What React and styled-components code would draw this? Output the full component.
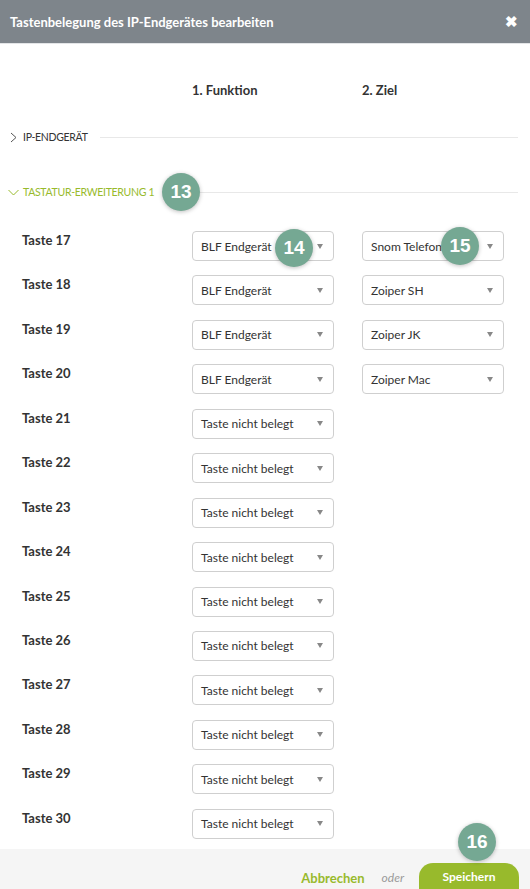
import React from 'react';
import styled, { createGlobalStyle } from 'styled-components';

const GlobalStyle = createGlobalStyle`
  html, body { margin: 0; padding: 0; background: #fff; }
  body { font-family: Lato, "Open Sans", sans-serif; color: #333; }
`;

const rows = [
  { key: 17, fn: 'BLF Endgerät', target: 'Snom Telefon', badgeFn: 14, badgeTarget: 15 },
  { key: 18, fn: 'BLF Endgerät', target: 'Zoiper SH' },
  { key: 19, fn: 'BLF Endgerät', target: 'Zoiper JK' },
  { key: 20, fn: 'BLF Endgerät', target: 'Zoiper Mac' },
  ...[21, 22, 23, 24, 25, 26, 27, 28, 29, 30].map((k) => ({ key: k, fn: 'Taste nicht belegt' })),
];

const Modal = styled.div`
  width: 530px;
  height: 889px;
  display: flex;
  flex-direction: column;
  overflow: hidden;
  position: relative;
`;

const Header = styled.div`
  height: 43px;
  background: #7e858b;
  border-bottom: 1px solid #e3e5e7;
  display: flex;
  align-items: center;
  justify-content: space-between;
  padding: 0 10px;
  color: #fff;
  font-weight: 700;
  font-size: 13px;
  flex-shrink: 0;
`;

const Close = styled.span`
  font-size: 15px;
  font-weight: 900;
  margin-right: 2px;
`;

const Body = styled.div`
  flex: 1;
  min-height: 0;
  padding: 38px 12px 0 8px;
`;

const ColHeads = styled.div`
  display: grid;
  grid-template-columns: 170px 170px;
  padding-left: 184px;
  font-weight: 700;
  font-size: 13px;
  color: #333;
  height: 16px;
  line-height: 16px;
`;

const Section = styled.div`
  display: flex;
  align-items: center;
  height: 20px;
  margin-top: ${(p) => p.$top}px;
  font-size: 10.5px;
  letter-spacing: -0.3px;
  text-transform: uppercase;
  color: ${(p) => (p.$open ? '#98ba2c' : '#333')};
  position: relative;
`;

const Chevron = styled.svg`
  width: 11px;
  height: 11px;
  margin-right: 4px;
  flex-shrink: 0;
`;

const Line = styled.div`
  flex: 1;
  height: 1px;
  background: #e8e8e8;
  margin-left: ${(p) => p.$gap}px;
`;

const Badge = styled.div`
  position: absolute;
  width: 38px;
  height: 38px;
  border-radius: 50%;
  background: #75a893;
  color: #fff;
  font-family: "Liberation Sans", Arial, sans-serif;
  font-weight: 700;
  font-size: 19px;
  display: flex;
  align-items: center;
  justify-content: center;
  box-shadow: 0 1px 4px rgba(0, 0, 0, 0.25);
  letter-spacing: 0;
  z-index: 2;
`;

const Grid = styled.div`
  margin-top: 29px;
  display: flex;
  flex-direction: column;
`;

const Row = styled.div`
  display: grid;
  grid-template-columns: 170px 170px 142px;
  padding-left: 14px;
  height: 44.45px;
`;

const Label = styled.div`
  font-weight: 700;
  font-size: 13px;
  color: #333;
  padding-top: 1px;
`;

const SelectBox = styled.div`
  position: relative;
  width: 142px;
  height: 30px;
  box-sizing: border-box;
  border: 1px solid #cfcfcf;
  border-radius: 4px;
  display: flex;
  align-items: center;
  padding: 0 10px 0 8px;
  font-size: 12px;
  color: #333;
  justify-content: space-between;
  background: #fff;
`;

const Caret = styled.span`
  width: 0;
  height: 0;
  border-left: 3px solid transparent;
  border-right: 3px solid transparent;
  border-top: 5px solid #888;
`;

const Footer = styled.div`
  height: 40px;
  background: #f5f5f5;
  display: flex;
  align-items: flex-end;
  justify-content: flex-end;
  padding-right: 11px;
  flex-shrink: 0;
  position: relative;
`;

const Cancel = styled.span`
  color: #98ba2c;
  font-weight: 700;
  font-size: 13px;
  line-height: 16px;
  margin-bottom: 3px;
`;

const Or = styled.span`
  color: #999;
  font-style: italic;
  font-size: 12px;
  line-height: 16px;
  margin: 0 15px 3px 17px;
`;

const SaveButton = styled.button`
  width: 100px;
  height: 26px;
  border: none;
  border-radius: 14px 14px 0 0;
  background: #98ba2c;
  color: #fff;
  font-family: inherit;
  font-weight: 700;
  font-size: 12px;
  line-height: 16px;
  padding: 2px 0 0;
`;

const Select = ({ value, badge, badgeLeft, badgeTop }) => (
  <SelectBox>
    <span>{value}</span>
    <Caret />
    {badge && <Badge style={{ left: badgeLeft, top: badgeTop }}>{badge}</Badge>}
  </SelectBox>
);

const ChevronRight = () => (
  <Chevron viewBox="0 0 11 11">
    <path d="M3 1 L8 5.5 L3 10" fill="none" stroke="#555" strokeWidth="1" />
  </Chevron>
);

const ChevronDown = () => (
  <Chevron viewBox="0 0 11 11">
    <path d="M0.5 3 L5.5 8 L10.5 3" fill="none" stroke="#98ba2c" strokeWidth="1" />
  </Chevron>
);

export default function App() {
  return (
    <>
      <GlobalStyle />
      <Modal>
        <Header>
          <span>Tastenbelegung des IP-Endgerätes bearbeiten</span>
          <Close>✖</Close>
        </Header>
        <Body>
          <ColHeads>
            <span>1. Funktion</span>
            <span>2. Ziel</span>
          </ColHeads>
          <Section $top={29}>
            <ChevronRight />
            IP-Endgerät
            <Line $gap={12} />
          </Section>
          <Section $top={35} $open>
            <ChevronDown />
            Tastatur-Erweiterung 1
            <Badge style={{ left: 154, top: -9 }}>13</Badge>
            <Line $gap={46} />
          </Section>
          <Grid>
            {rows.map((r) => (
              <Row key={r.key}>
                <Label>Taste {r.key}</Label>
                <Select value={r.fn} badge={r.badgeFn} badgeLeft={82} badgeTop={-3} />
                {r.target ? (
                  <Select value={r.target} badge={r.badgeTarget} badgeLeft={78} badgeTop={-5} />
                ) : (
                  <div />
                )}
              </Row>
            ))}
          </Grid>
        </Body>
        <Footer>
          <Badge style={{ left: 458, top: -26 }}>16</Badge>
          <Cancel>Abbrechen</Cancel>
          <Or>oder</Or>
          <SaveButton>Speichern</SaveButton>
        </Footer>
      </Modal>
    </>
  );
}
